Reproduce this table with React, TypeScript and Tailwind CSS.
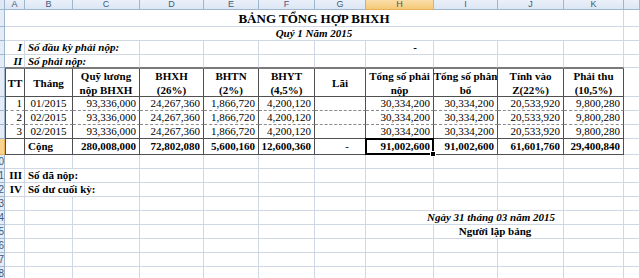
import React from 'react';
import clsx from 'clsx';

const COLS = 'grid grid-cols-[5px_20px_48px_67px_64px_55px_56px_51px_68px_64px_66px_60px_16px]';
const LETTERS = ['A', 'B', 'C', 'D', 'E', 'F', 'G', 'H', 'I', 'J', 'K', ''];

const SPAN: Record<number, string> = {
  1: 'col-span-1',
  2: 'col-span-2',
  3: 'col-span-3',
  11: 'col-span-11',
};

// plain worksheet cell with the light gridlines
const Cell: React.FC<{ span?: number; className?: string; children?: React.ReactNode }> = ({
  span = 1,
  className,
  children,
}) => (
  <div
    className={clsx(
      SPAN[span],
      'flex items-center overflow-hidden whitespace-nowrap border-r border-b border-[#d0d7e5] px-[3px]',
      className
    )}
  >
    {children}
  </div>
);

type Bottom = 'solid' | 'dash';

// cell inside the bordered table
const TCell: React.FC<{
  first?: boolean;
  bottom?: Bottom;
  span?: number;
  className?: string;
  children?: React.ReactNode;
}> = ({ first, bottom = 'solid', span = 1, className, children }) => (
  <div
    className={clsx(
      SPAN[span],
      'flex items-center overflow-hidden whitespace-nowrap px-[3px] border-r border-r-[#505050] border-b',
      first && 'border-l border-l-[#505050]',
      bottom === 'solid' ? 'border-b-[#505050]' : 'border-b-[#8c8c8c] [border-bottom-style:dashed]',
      className
    )}
  >
    {children}
  </div>
);

// only the last few pixels of the row numbers are on screen
const RowHead: React.FC<{ n: number; active?: boolean }> = ({ n, active }) => (
  <div
    className={clsx(
      'overflow-hidden border-r border-b',
      active ? 'bg-[#f8d48e] border-[#e5b05a]' : 'bg-[#e4ecf7] border-[#9eb6ce]'
    )}
  >
    {n >= 10 && (
      <div className="-ml-[16px] w-[20px] text-right font-['Liberation_Sans',Arial,sans-serif] text-[10px] leading-[13px] text-[#3f5a7a]">
        {n}
      </div>
    )}
  </div>
);

const Row: React.FC<{ h: string; n: number; active?: boolean; children: React.ReactNode }> = ({
  h,
  n,
  active,
  children,
}) => (
  <div className={clsx(COLS, h)}>
    <RowHead n={n} active={active} />
    {children}
  </div>
);

const data = [
  ['1', '01/2015', '93,336,000', '24,267,360', '1,866,720', '4,200,120', '', '30,334,200', '30,334,200', '20,533,920', '9,800,280'],
  ['2', '02/2015', '93,336,000', '24,267,360', '1,866,720', '4,200,120', '', '30,334,200', '30,334,200', '20,533,920', '9,800,280'],
  ['3', '02/2015', '93,336,000', '24,267,360', '1,866,720', '4,200,120', '', '30,334,200', '30,334,200', '20,533,920', '9,800,280'],
];

const total = ['280,008,000', '72,802,080', '5,600,160', '12,600,360'];
const totalRight = ['91,002,600', '61,601,760', '29,400,840'];

const headers: React.ReactNode[] = [
  'TT',
  'Tháng',
  <>Quỹ lương<br />nộp BHXH</>,
  <>BHXH<br />(26%)</>,
  <>BHTN<br />(2%)</>,
  <>BHYT<br />(4,5%)</>,
  'Lãi',
  <>Tổng số phải<br />nộp</>,
  <>Tổng số phân<br />bổ</>,
  <>Tính vào<br />Z(22%)</>,
  <>Phải thu<br />(10,5%)</>,
];

const Blank: React.FC<{ n: number }> = ({ n }) => (
  <Row h="h-[14px]" n={n}>
    {LETTERS.map((l, i) => (
      <Cell key={i} />
    ))}
  </Row>
);

export default function App() {
  return (
    <div className="h-[278px] w-[640px] overflow-hidden bg-white font-['Liberation_Serif','Times_New_Roman',serif] text-[11px] leading-[13px] text-black">
      {/* column letters */}
      <div className={clsx(COLS, 'h-[10px]')}>
        <div className="border-r border-b border-[#9eb6ce] bg-[#dfe8f5]" />
        {LETTERS.map((l, i) => (
          <div
            key={i}
            className={clsx(
              'flex items-end justify-center overflow-hidden border-r border-b font-[\'Liberation_Sans\',Arial,sans-serif] text-[9px] leading-[9px] text-[#3f5a7a]',
              l === 'H'
                ? 'bg-gradient-to-b from-[#f9dea8] to-[#f6c877] border-[#e5b05a]'
                : 'bg-gradient-to-b from-[#eaf0f9] to-[#dce6f4] border-[#9eb6ce]'
            )}
          >
            {l}
          </div>
        ))}
      </div>

      <Row h="h-[17px]" n={1}>
        <Cell span={11} className="justify-center text-[13px] font-bold leading-[15px]">
          BẢNG TỔNG HỢP BHXH
        </Cell>
        <Cell />
      </Row>

      <Row h="h-[14px]" n={2}>
        <Cell span={11} className="justify-center font-bold italic">
          Quý 1 Năm 2015
        </Cell>
        <Cell />
      </Row>

      <Row h="h-[14px]" n={3}>
        <Cell className="justify-end pr-[2px] font-bold italic">I</Cell>
        <Cell span={2} className="font-bold italic">
          Số đầu kỳ phải nộp:
        </Cell>
        <Cell />
        <Cell />
        <Cell />
        <Cell />
        <Cell className="justify-end pr-[16px] font-bold">-</Cell>
        <Cell />
        <Cell />
        <Cell />
        <Cell />
      </Row>

      <Row h="h-[13px]" n={4}>
        <Cell className="justify-end pr-[2px] font-bold italic border-b-[#7a7a7a]">II</Cell>
        <Cell span={2} className="font-bold italic border-b-[#7a7a7a]">
          Số phải nộp:
        </Cell>
        {Array.from({ length: 8 }).map((_, i) => (
          <Cell key={i} className="border-b-[#7a7a7a]" />
        ))}
        <Cell />
      </Row>

      {/* table header */}
      <Row h="h-[29px]" n={5}>
        {headers.map((t, i) => (
          <TCell
            key={i}
            first={i === 0}
            className="justify-center text-center font-bold leading-[14px] border-t border-t-[#7a7a7a]"
          >
            <div>{t}</div>
          </TCell>
        ))}
        <Cell />
      </Row>

      {data.map((r, ri) => (
        <Row key={ri} h="h-[14px]" n={6 + ri}>
          {r.map((v, i) => (
            <TCell
              key={i}
              first={i === 0}
              bottom={ri === 2 ? 'solid' : 'dash'}
              className={clsx(i === 1 ? 'justify-center' : 'justify-end', i === 0 && 'pr-[2px]')}
            >
              {v}
            </TCell>
          ))}
          <Cell />
        </Row>
      ))}

      {/* totals */}
      <Row h="h-[16px]" n={9} active>
        <TCell first />
        <TCell className="font-bold">Cộng</TCell>
        {total.map((v, i) => (
          <TCell key={i} className="justify-end font-bold">
            {v}
          </TCell>
        ))}
        <TCell className="justify-end pr-[16px]">-</TCell>
        <div className="relative z-10 flex items-center justify-end border-r border-b border-[#505050] px-[3px] font-bold">
          91,002,600
          <div className="pointer-events-none absolute -left-[1px] -top-[1px] -right-[1px] -bottom-[1px] border-2 border-black" />
          <div className="absolute -right-[3px] -bottom-[3px] h-[6px] w-[6px] border border-white bg-black" />
        </div>
        {totalRight.map((v, i) => (
          <TCell key={i} className="justify-end font-bold">
            {v}
          </TCell>
        ))}
        <Cell />
      </Row>

      <Blank n={10} />

      <Row h="h-[14px]" n={11}>
        <Cell className="justify-end pr-[2px] font-bold">III</Cell>
        <Cell span={2} className="font-bold">
          Số đã nộp:
        </Cell>
        {Array.from({ length: 9 }).map((_, i) => (
          <Cell key={i} />
        ))}
      </Row>

      <Row h="h-[14px]" n={12}>
        <Cell className="justify-end pr-[2px] font-bold">IV</Cell>
        <Cell span={2} className="font-bold">
          Số dư cuối kỳ:
        </Cell>
        {Array.from({ length: 9 }).map((_, i) => (
          <Cell key={i} />
        ))}
      </Row>

      <Blank n={13} />

      <Row h="h-[14px]" n={14}>
        {Array.from({ length: 7 }).map((_, i) => (
          <Cell key={i} />
        ))}
        <Cell span={3} className="justify-center pl-[56px] font-bold italic">
          Ngày 31 tháng 03 năm 2015
        </Cell>
        <Cell />
        <Cell />
      </Row>

      <Row h="h-[14px]" n={15}>
        {Array.from({ length: 8 }).map((_, i) => (
          <Cell key={i} />
        ))}
        <Cell span={2} className="justify-center pr-[10px] font-bold">
          Người lập bảng
        </Cell>
        <Cell />
        <Cell />
      </Row>

      <Blank n={16} />
      <Blank n={17} />
      <Blank n={18} />
    </div>
  );
}
